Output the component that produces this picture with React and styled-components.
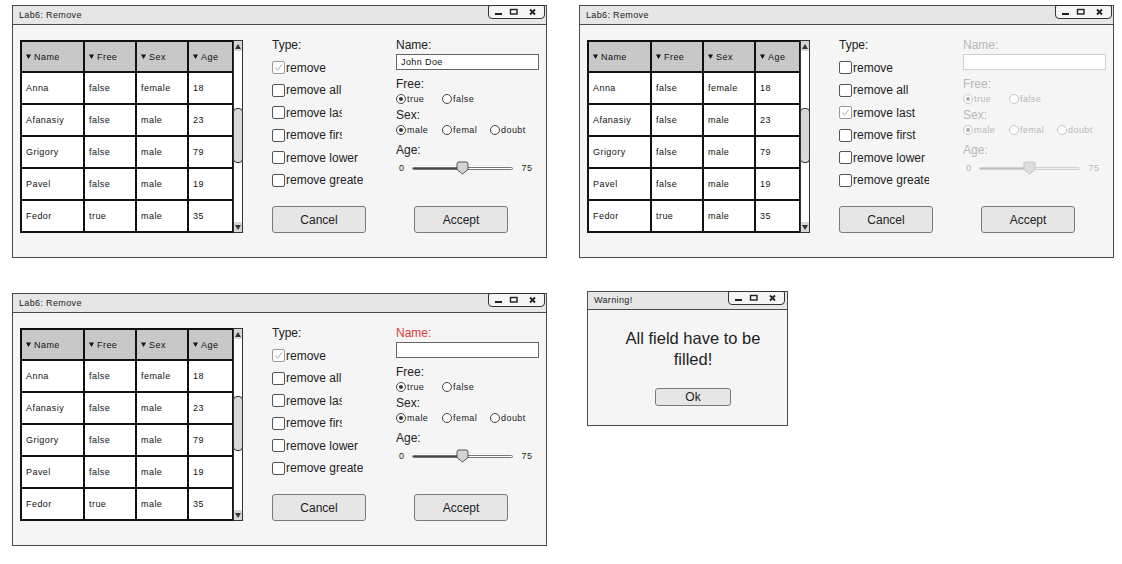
import React from 'react';
import styled, { createGlobalStyle } from 'styled-components';

const GlobalStyle = createGlobalStyle`
  body {
    margin: 0;
    background: #fff;
    font-family: "Liberation Sans", Arial, sans-serif;
  }
`;

const ROWS = [
  ['Anna', 'false', 'female', '18'],
  ['Afanasiy', 'false', 'male', '23'],
  ['Grigory', 'false', 'male', '79'],
  ['Pavel', 'false', 'male', '19'],
  ['Fedor', 'true', 'male', '35'],
];

const TYPES = ['remove', 'remove all', 'remove last', 'remove first', 'remove lower', 'remove greater'];

// page holding the mock windows
const Desktop = styled.div`
  display: grid;
  grid-template-columns: 535px 535px;
  column-gap: 32px;
  row-gap: 35px;
  padding: 5px 0 0 12px;
  align-items: start;
`;

const Frame = styled.div`
  box-sizing: border-box;
  width: ${p => p.$w}px;
  height: ${p => p.$h}px;
  border: 1px solid #4a4a4a;
  background: #f5f5f5;
  display: flex;
  flex-direction: column;
  margin: ${p => p.$margin || '0'};
`;

const TitleBar = styled.div`
  height: ${p => p.$h}px;
  flex: none;
  display: flex;
  justify-content: space-between;
  align-items: flex-start;
  background: #e6e6e6;
  border-bottom: 1px solid #4a4a4a;
`;

const TitleText = styled.span`
  font-size: 9px;
  letter-spacing: 0.35px;
  color: #222;
  padding-left: 6px;
  line-height: ${p => p.$h}px;
`;

const ControlBox = styled.div`
  box-sizing: border-box;
  width: 57px;
  height: 14px;
  margin: -1px ${p => p.$right}px 0 0;
  border: 1px solid #333;
  border-radius: 2px 2px 4px 4px;
  background: #f5f5f5;
  display: flex;
`;

const Body = styled.div`
  flex: 1;
  display: flex;
  align-items: flex-start;
  padding: 9px 0 0 7px;
`;

const TableWrap = styled.div`
  display: flex;
  align-items: flex-start;
  margin-top: 6px;
`;

const Grid = styled.div`
  display: grid;
  grid-template-columns: 61px 50px 50px 43px;
  grid-template-rows: 29px repeat(5, 30px);
  gap: 2px;
  padding: 2px;
  background: #111;
`;

const Cell = styled.div`
  background: ${p => (p.$head ? '#c8c8c8' : '#fff')};
  font-size: 9px;
  letter-spacing: 0.45px;
  color: #111;
  display: flex;
  align-items: center;
  padding-left: 4px;
  white-space: nowrap;
`;

const Caret = styled.svg`
  margin-right: 3px;
  flex: none;
`;

const Scroll = styled.div`
  box-sizing: border-box;
  width: 10px;
  height: 193px;
  margin-left: -1px;
  border: 1px solid #333;
  background: #fff;
  display: flex;
  flex-direction: column;
  justify-content: space-between;
`;

const ScrollArrow = styled.div`
  height: 10px;
  background: #d6d6d6;
  display: flex;
  align-items: center;
  justify-content: center;
`;

const ScrollTrack = styled.div`
  flex: 1;
  display: flex;
  flex-direction: column;
  padding-top: 57px;
`;

const Thumb = styled.div`
  box-sizing: border-box;
  height: 55px;
  margin: 0 -1px;
  background: #d9d9d9;
  border: 1px solid #333;
  border-radius: 4px;
`;

const Controls = styled.div`
  margin-left: 29px;
  display: flex;
  flex-direction: column;
`;

const Columns = styled.div`
  display: flex;
  height: 172px;
`;

const TypeCol = styled.div`
  width: 124px;
  display: flex;
  flex-direction: column;
`;

const TypeTitle = styled.div`
  font-size: 12px;
  line-height: 22.5px;
  color: #222;
`;

const CheckRow = styled.div`
  height: 22.5px;
  display: flex;
  align-items: center;
`;

const Box = styled.div`
  box-sizing: border-box;
  width: 13px;
  height: 13px;
  flex: none;
  border: 1px solid ${p => (p.$checked ? '#9a9a9a' : '#555')};
  border-radius: 2px;
  background: #fff;
  display: flex;
  align-items: center;
  justify-content: center;
  margin-right: 1px;
`;

const CheckText = styled.span`
  font-size: 12px;
  color: #222;
  white-space: nowrap;
  overflow: hidden;
  width: ${p => (p.$clip ? `${p.$clip}px` : 'auto')};
`;

const FieldCol = styled.div`
  width: 143px;
  padding-top: 4px;
  display: flex;
  flex-direction: column;
  color: ${p => (p.$off ? '#b8b8b8' : '#222')};
`;

const FieldLabel = styled.div`
  font-size: 12px;
  line-height: 14px;
  margin-top: ${p => p.$top || 0}px;
  color: ${p => p.$color || 'inherit'};
`;

const TextInput = styled.div`
  box-sizing: border-box;
  height: 16px;
  margin: 2px 0 7px;
  border: 1px solid ${p => (p.$off ? '#cfcfcf' : '#666')};
  background: #fff;
  font-size: 9px;
  letter-spacing: 0.4px;
  color: #111;
  padding-left: 4px;
  display: flex;
  align-items: center;
`;

const RadioRow = styled.div`
  height: 16px;
  display: flex;
  align-items: center;
`;

const RadioItem = styled.div`
  width: ${p => p.$w}px;
  display: flex;
  align-items: center;
  font-size: 9px;
  letter-spacing: 0.45px;
`;

const Circle = styled.span`
  box-sizing: border-box;
  width: 10px;
  height: 10px;
  border-radius: 50%;
  border: 1px solid ${p => (p.$off ? '#c4c4c4' : '#444')};
  background: #fff;
  display: flex;
  align-items: center;
  justify-content: center;
  margin-right: 1px;
  &::after {
    content: '';
    display: ${p => (p.$on ? 'block' : 'none')};
    width: 4px;
    height: 4px;
    border-radius: 50%;
    background: ${p => (p.$off ? '#b0b0b0' : '#333')};
  }
`;

const SliderRow = styled.div`
  height: 22px;
  display: flex;
  align-items: center;
  padding-left: 3px;
  font-size: 9px;
  letter-spacing: 0.45px;
`;

const Track = styled.div`
  position: relative;
  width: 101px;
  height: 3px;
  margin: 0 8px 0 8px;
  box-sizing: border-box;
  border: 1px solid ${p => (p.$off ? '#cfcfcf' : '#777')};
  border-radius: 2px;
  background: ${p =>
    p.$off
      ? 'linear-gradient(to right, #bdbdbd 47%, #f0f0f0 47%)'
      : 'linear-gradient(to right, #444 47%, #fff 47%)'};
`;

const SliderThumb = styled.svg`
  position: absolute;
  left: 43px;
  top: -7px;
`;

const ButtonRow = styled.div`
  display: flex;
  gap: 48px;
`;

const Button = styled.div`
  box-sizing: border-box;
  width: ${p => p.$w}px;
  height: ${p => p.$h}px;
  border: 1px solid #7a7a7a;
  border-radius: 3px;
  background: #e6e6e6;
  font-size: 12px;
  color: #222;
  display: flex;
  align-items: center;
  justify-content: center;
`;

const WarnBody = styled.div`
  flex: 1;
  display: flex;
  flex-direction: column;
  align-items: center;
  padding: 18px 0 0 11px;
`;

const WarnText = styled.div`
  width: 150px;
  text-align: center;
  font-size: 16.5px;
  line-height: 21px;
  color: #222;
  margin-bottom: 18px;
`;

const WindowControls = ({ right }) => (
  <ControlBox $right={right}>
    <svg width="55" height="12" viewBox="0 0 55 12">
      <rect x="6" y="7" width="7" height="2" fill="#222" />
      <rect x="21.5" y="3.5" width="6.5" height="4.5" fill="none" stroke="#222" strokeWidth="1.4" />
      <path d="M41 3.5 L46 8.5 M46 3.5 L41 8.5" stroke="#222" strokeWidth="1.8" />
    </svg>
  </ControlBox>
);

const Check = ({ checked }) => (
  <Box $checked={checked}>
    {checked && (
      <svg width="9" height="9" viewBox="0 0 9 9">
        <path d="M1.5 4.8 L3.6 7.2 L7.8 1.5" fill="none" stroke="#a8a8a8" strokeWidth="1" />
      </svg>
    )}
  </Box>
);

const Radio = ({ w, on, off, children }) => (
  <RadioItem $w={w}>
    <Circle $on={on} $off={off} />
    {children}
  </RadioItem>
);

const DataTable = () => (
  <TableWrap>
    <Grid>
      {['Name', 'Free', 'Sex', 'Age'].map(h => (
        <Cell key={h} $head>
          <Caret width="5" height="5" viewBox="0 0 5 5">
            <path d="M0 0.5 L5 0.5 L2.5 5 Z" fill="#111" />
          </Caret>
          {h}
        </Cell>
      ))}
      {ROWS.flat().map((v, i) => (
        <Cell key={i}>{v}</Cell>
      ))}
    </Grid>
    <Scroll>
      <ScrollArrow>
        <svg width="6" height="5" viewBox="0 0 6 5"><path d="M0 5 L3 0 L6 5 Z" fill="#333" /></svg>
      </ScrollArrow>
      <ScrollTrack>
        <Thumb />
      </ScrollTrack>
      <ScrollArrow>
        <svg width="6" height="5" viewBox="0 0 6 5"><path d="M0 0 L3 5 L6 0 Z" fill="#333" /></svg>
      </ScrollArrow>
    </Scroll>
  </TableWrap>
);

const RemoveWindow = ({ checked, name, nameColor, off, clips }) => (
  <Frame $w={535} $h={253}>
    <TitleBar $h={18}>
      <TitleText $h={18}>Lab6: Remove</TitleText>
      <WindowControls right={1} />
    </TitleBar>
    <Body>
      <DataTable />
      <Controls>
        <Columns>
          <TypeCol>
            <TypeTitle>Type:</TypeTitle>
            {TYPES.map((t, i) => (
              <CheckRow key={t}>
                <Check checked={i === checked} />
                <CheckText $clip={clips[i]}>{t}</CheckText>
              </CheckRow>
            ))}
          </TypeCol>
          <FieldCol $off={off}>
            <FieldLabel $color={nameColor}>Name:</FieldLabel>
            <TextInput $off={off}>{name}</TextInput>
            <FieldLabel>Free:</FieldLabel>
            <RadioRow>
              <Radio w={46} on off={off}>true</Radio>
              <Radio w={48} off={off}>false</Radio>
            </RadioRow>
            <FieldLabel $top={1}>Sex:</FieldLabel>
            <RadioRow>
              <Radio w={46} on off={off}>male</Radio>
              <Radio w={48} off={off}>femal</Radio>
              <Radio w={44} off={off}>doubt</Radio>
            </RadioRow>
            <FieldLabel $top={5}>Age:</FieldLabel>
            <SliderRow>
              <span>0</span>
              <Track $off={off}>
                <SliderThumb width="13" height="14" viewBox="0 0 13 14">
                  <path
                    d="M1 3 Q1 1 3 1 L10 1 Q12 1 12 3 L12 8.5 L6.5 13 L1 8.5 Z"
                    fill={off ? '#dedede' : '#d4d4d4'}
                    stroke={off ? '#c4c4c4' : '#555'}
                    strokeWidth="1"
                  />
                </SliderThumb>
              </Track>
              <span>75</span>
            </SliderRow>
          </FieldCol>
        </Columns>
        <ButtonRow>
          <Button $w={94} $h={27}>Cancel</Button>
          <Button $w={94} $h={27}>Accept</Button>
        </ButtonRow>
      </Controls>
    </Body>
  </Frame>
);

const WarningWindow = () => (
  <Frame $w={201} $h={135} $margin="-2px 0 0 8px">
    <TitleBar $h={17}>
      <TitleText $h={17}>Warning!</TitleText>
      <WindowControls right={2} />
    </TitleBar>
    <WarnBody>
      <WarnText>All field have to be filled!</WarnText>
      <Button $w={76} $h={18}>Ok</Button>
    </WarnBody>
  </Frame>
);

export default function App() {
  return (
    <>
      <GlobalStyle />
      <Desktop>
        <RemoveWindow checked={0} name="John Doe" clips={[0, 56, 56, 56, 0, 77]} />
        <RemoveWindow checked={2} name="" off clips={[0, 0, 0, 0, 0, 76]} />
        <RemoveWindow checked={0} name="" nameColor="#e0393e" clips={[0, 56, 56, 56, 0, 77]} />
        <WarningWindow />
      </Desktop>
    </>
  );
}
